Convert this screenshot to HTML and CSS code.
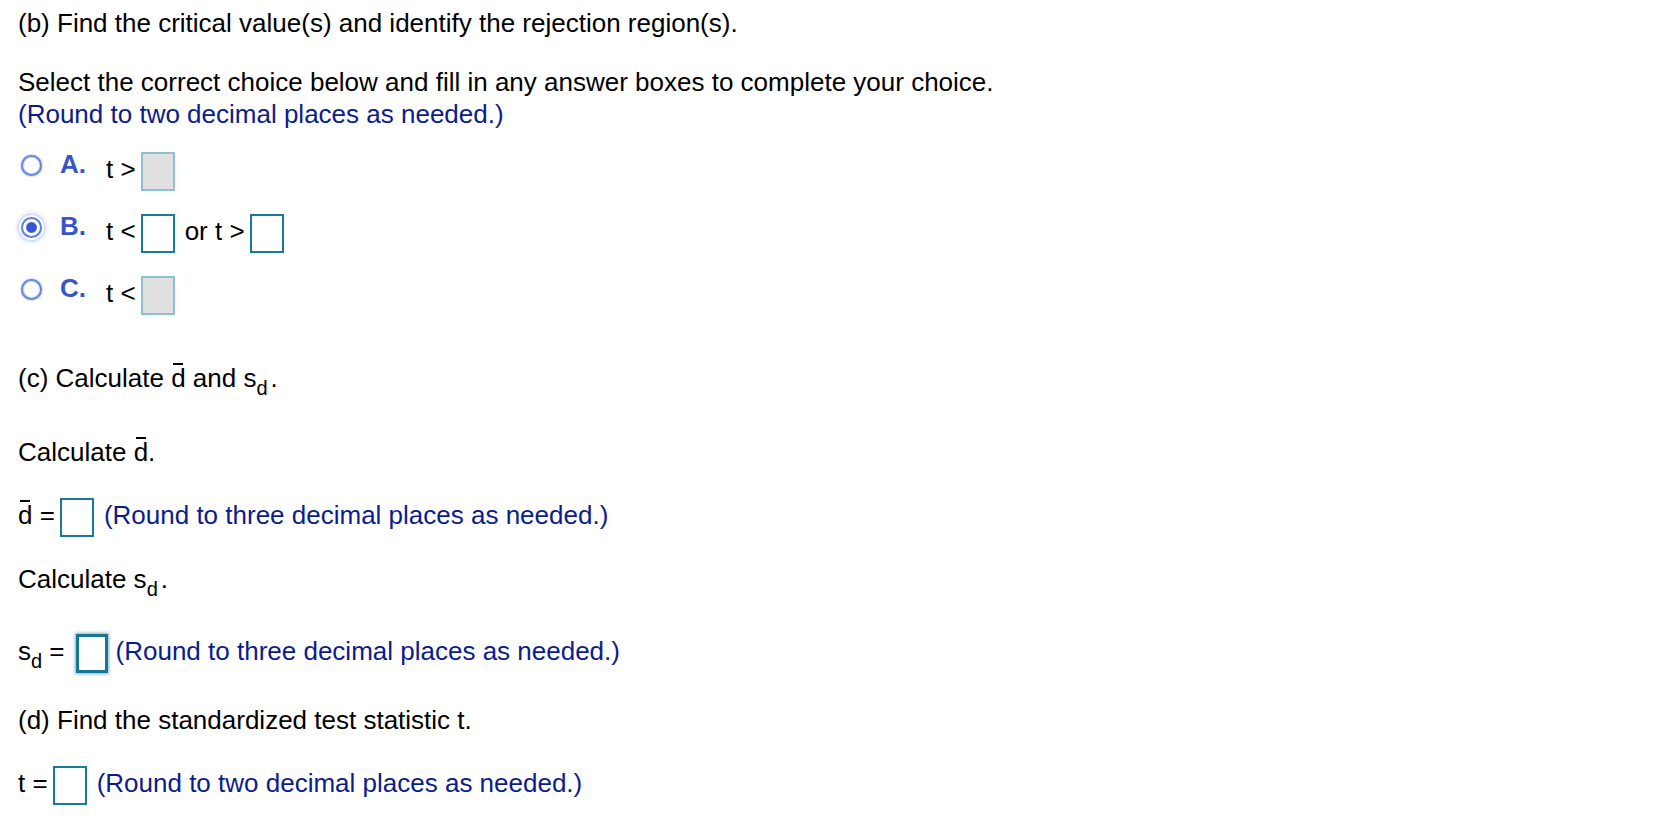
FILE: index.html
```html
<!DOCTYPE html>
<html>
<head>
<meta charset="utf-8">
<title>Paired t-test</title>
<link rel="stylesheet" href="styles.css">
</head>
<body>
<div class="page">
  <p class="line first">(b) Find the critical value(s) and identify the rejection region(s).</p>
  <p class="line gap-27">Select the correct choice below and fill in any answer boxes to complete your choice.</p>
  <p class="line hint">(Round to two decimal places as needed.)</p>

  <div class="row gap-22"><span class="radio"></span><span class="label">A.</span>t &gt;<span class="box disabled"></span></div>
  <div class="row gap-23"><span class="radio checked"></span><span class="label">B.</span>t &lt;<span class="box"></span>or t &gt;<span class="box"></span></div>
  <div class="row gap-23"><span class="radio"></span><span class="label">C.</span>t &lt;<span class="box disabled"></span></div>

  <p class="line gap-47">(c) Calculate <span class="bar">d</span> and s<sub class="sub dot">d</sub>.</p>
  <p class="line gap-42">Calculate <span class="bar">d</span>.</p>
  <div class="row gap-30"><span class="bar">d</span> =<span class="box"></span><span class="hint">(Round to three decimal places as needed.)</span></div>
  <p class="line gap-26">Calculate s<sub class="sub dot">d</sub>.</p>
  <div class="row gap-39">s<sub class="sub">d</sub> =<span class="box focus"></span><span class="hint">(Round to three decimal places as needed.)</span></div>
  <p class="line gap-31">(d) Find the standardized test statistic t.</p>
  <div class="row gap-30">t =<span class="box"></span><span class="hint">(Round to two decimal places as needed.)</span></div>
</div>
</body>
</html>
```

FILE: styles.css
```css
html, body {
  margin: 0;
  padding: 0;
  background: #ffffff;
}

body {
  font-family: "Liberation Sans", Arial, Helvetica, sans-serif;
  font-size: 26px;
  line-height: 32px;
  color: #000000;
}

.page {
  padding: 7px 18px 0 18px;
}

.line {
  margin: 0;
  white-space: nowrap;
}

.row {
  white-space: nowrap;
}

.hint {
  color: #0b1c8c;
}

.gap-22 { margin-top: 22px; }
.gap-23 { margin-top: 23px; }
.gap-26 { margin-top: 26px; }
.gap-27 { margin-top: 27px; }
.gap-30 { margin-top: 30px; }
.gap-31 { margin-top: 31px; }
.gap-39 { margin-top: 39px; }
.gap-42 { margin-top: 42px; }
.gap-47 { margin-top: 47px; }

/* radio buttons */
.radio {
  display: inline-block;
  box-sizing: border-box;
  width: 21px;
  height: 21px;
  margin-left: 3px;
  margin-right: 18px;
  border: 2.5px solid #6a88dd;
  border-radius: 50%;
  background: #ffffff;
  vertical-align: 2px;
  box-shadow: 0 0 2px rgba(80, 110, 215, 0.8), inset 0 0 2px rgba(80, 110, 215, 0.6);
}

.radio.checked {
  border-color: #5f80da;
  background: radial-gradient(circle, #3556cc 0, #3556cc 4.8px, #ffffff 6px);
  box-shadow: 0 0 0 2px #ffffff, 0 0 1px 3px #ccd7f5, 0 0 3px 5px rgba(205, 215, 245, 0.55);
}

.label {
  font-weight: bold;
  color: #3a55c8;
  margin-right: 20px;
  line-height: 20px;
  vertical-align: 5px;
}

/* answer boxes */
.box {
  display: inline-block;
  box-sizing: border-box;
  width: 34px;
  height: 39px;
  margin-left: 5px;
  margin-right: 10px;
  border: 2px solid #177a99;
  background: #ffffff;
  vertical-align: middle;
}

.box.disabled {
  border-color: #8dc1d0;
  background: #e0e0e0;
}

.box.focus {
  width: 32px;
  margin-left: 11px;
  margin-right: 8px;
  border: 3px solid #1a7594;
  box-shadow: 0 0 3px 1px rgba(25, 115, 150, 0.55);
}

/* x-bar overline */
.bar {
  position: relative;
  display: inline-block;
}

.bar::before {
  content: "";
  position: absolute;
  left: 2px;
  top: 1px;
  width: 10px;
  height: 2px;
  background: currentColor;
}

/* subscript */
.sub {
  font-size: 20px;
  line-height: 0;
  vertical-align: -8px;
}

.sub.dot {
  margin-right: 3px;
}
```
